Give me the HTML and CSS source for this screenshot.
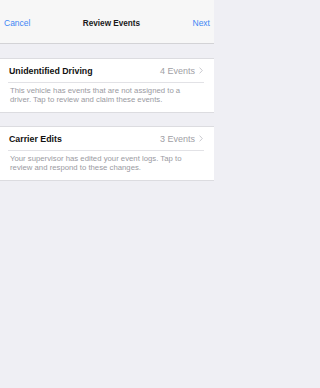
FILE: index.html
```html
<!DOCTYPE html>
<html>
<head>
<meta charset="utf-8">
<link rel="stylesheet" href="styles.css">
</head>
<body>
<div class="nav">
  <span class="nav-btn">Cancel</span>
  <span class="nav-title">Review Events</span>
  <span class="nav-btn">Next</span>
</div>
<div class="list">
  <div class="card">
    <div class="card-head">
      <span class="card-title">Unidentified Driving</span>
      <span class="card-count">4 Events
        <svg class="chev" width="4" height="7" viewBox="0 0 4 7"><path d="M0.6 0.6 L3.3 3.5 L0.6 6.4" fill="none" stroke="#c4c4c9" stroke-width="0.9"/></svg>
      </span>
    </div>
    <div class="card-sep"></div>
    <p class="card-desc">This vehicle has events that are not assigned to a driver. Tap to review and claim these events.</p>
  </div>
  <div class="card">
    <div class="card-head">
      <span class="card-title">Carrier Edits</span>
      <span class="card-count">3 Events
        <svg class="chev" width="4" height="7" viewBox="0 0 4 7"><path d="M0.6 0.6 L3.3 3.5 L0.6 6.4" fill="none" stroke="#c4c4c9" stroke-width="0.9"/></svg>
      </span>
    </div>
    <div class="card-sep"></div>
    <p class="card-desc">Your supervisor has edited your event logs. Tap to review and respond to these changes.</p>
  </div>
</div>
</body>
</html>
```
FILE: styles.css
```css
html, body {
  margin: 0;
  padding: 0;
}
body {
  background: #efeff4;
  font-family: "Liberation Sans", Arial, sans-serif;
  width: 214px;
  height: 388px;
  overflow: hidden;
}
.nav {
  height: 43px;
  background: #f7f7f7;
  border-bottom: 1px solid #d3d3d6;
  display: flex;
  align-items: center;
  justify-content: space-between;
  padding: 0 4px;
  box-sizing: content-box;
}
.nav-btn {
  color: #3f87f5;
  font-size: 8.5px;
  margin-top: 3px;
}
.nav-title {
  color: #1a1a1a;
  font-size: 8.2px;
  font-weight: bold;
  margin-top: 3px;
}
.list {
  display: flex;
  flex-direction: column;
  gap: 13px;
  padding-top: 14px;
}
.card {
  background: #fff;
  border-top: 1px solid #dcdce0;
  border-bottom: 1px solid #dcdce0;
}
.card-head {
  height: 23px;
  display: flex;
  align-items: center;
  justify-content: space-between;
  padding: 0 11px 0 9px;
}
.card-title {
  font-size: 8.8px;
  font-weight: bold;
  color: #111;
}
.card-count {
  font-size: 9px;
  color: #a0a0a5;
  display: flex;
  align-items: center;
  gap: 4px;
}
.chev {
  display: block;
}
.card-sep {
  height: 1px;
  background: #e2e2e6;
  margin: 0 10px 0 8px;
}
.card-desc {
  margin: 0;
  padding: 3px 22px 8px 10px;
  font-size: 7.75px;
  line-height: 9px;
  color: #9a9a9f;
}
```
